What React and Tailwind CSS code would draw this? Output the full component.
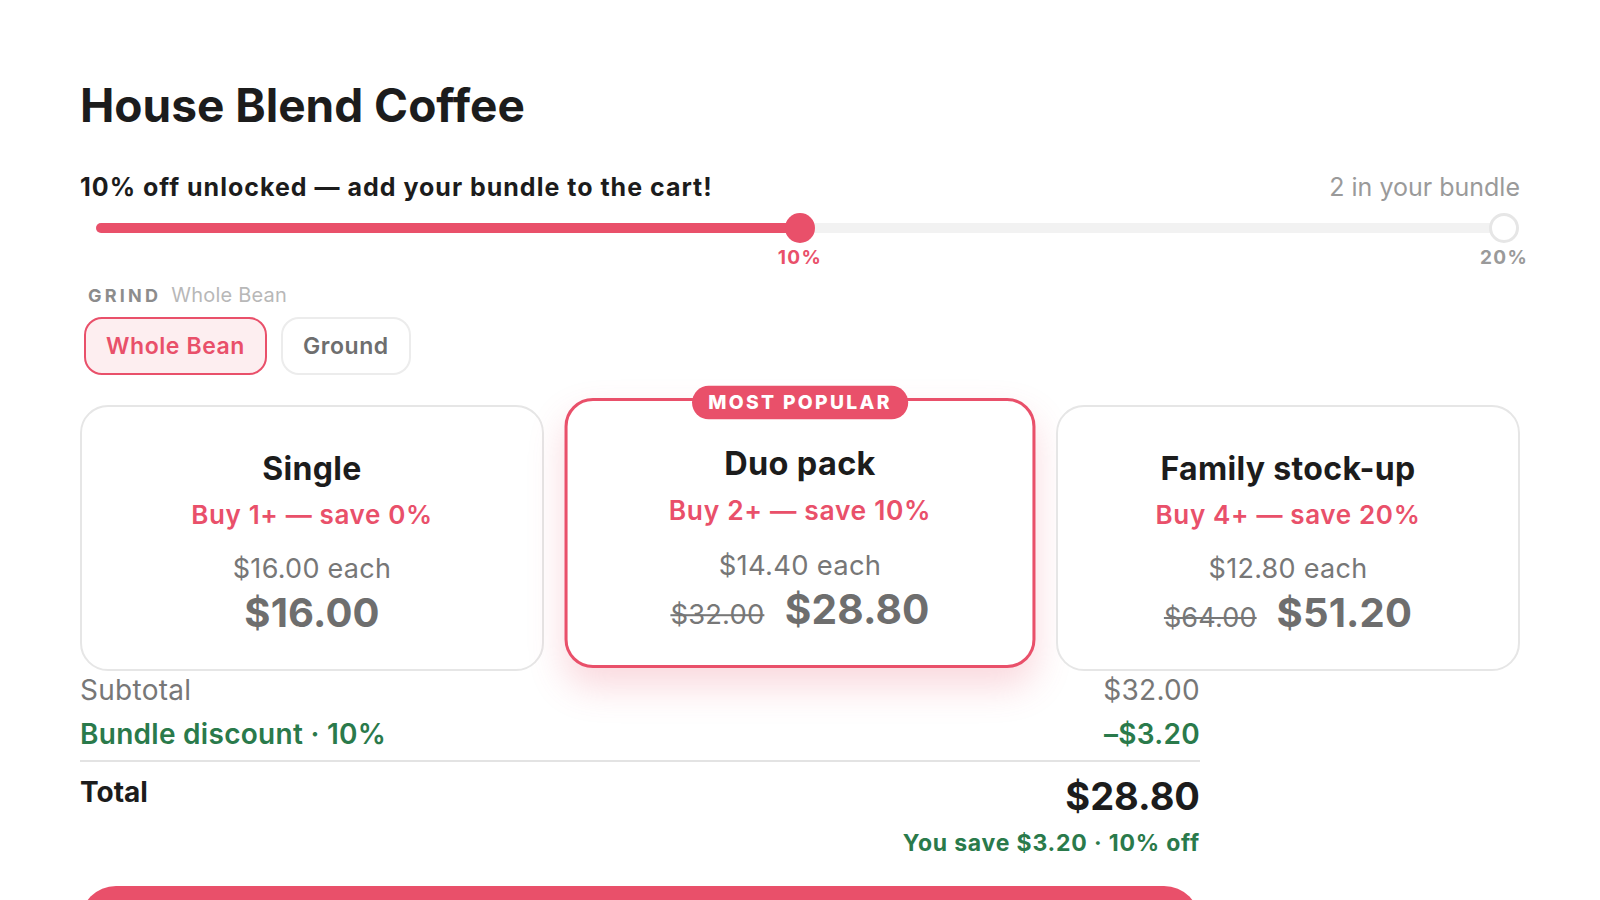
import React, { useState } from 'react';

const tiers = [
  { id: 'single', name: 'Single', rule: 'Buy 1+ — save 0%', each: '$16.00', was: null, price: '$16.00' },
  { id: 'duo', name: 'Duo pack', rule: 'Buy 2+ — save 10%', each: '$14.40', was: '$32.00', price: '$28.80', popular: true },
  { id: 'family', name: 'Family stock-up', rule: 'Buy 4+ — save 20%', each: '$12.80', was: '$64.00', price: '$51.20' },
];

const App = () => {
  const [grind, setGrind] = useState('Whole Bean');
  const [tier, setTier] = useState('duo');

  return (
    <div className="min-h-screen bg-white px-20 pt-[82px] text-[#1c1c1c]" style={{ fontFamily: 'Inter, "Noto Sans", sans-serif' }}>
      <h1 className="text-[46px] font-bold leading-none">House Blend Coffee</h1>

      {/* PROGRESS */}
      <div className="mt-[43px] flex items-baseline justify-between">
        <p className="text-[25px] font-bold leading-8 tracking-[0.04em]">10% off unlocked — add your bundle to the cart!</p>
        <p className="text-[25px] leading-8 text-[#9a9a9a]">2 in your bundle</p>
      </div>
      <div className="relative mx-4 mt-[10px] h-[56px]">
        <div className="absolute inset-x-0 top-[10px] h-[10px] rounded-full bg-[#f2f2f2]">
          <div className="h-full w-1/2 rounded-full bg-[#e9506a]"></div>
        </div>
        <div className="absolute left-1/2 top-0 size-[30px] -translate-x-1/2 rounded-full bg-[#e9506a]"></div>
        <div className="absolute left-full top-0 size-[30px] -translate-x-1/2 rounded-full border-[3px] border-[#e6e6e6] bg-white"></div>
        <span className="absolute left-1/2 top-[33px] -translate-x-1/2 text-[19px] font-bold leading-6 tracking-[0.07em] text-[#e9506a]">10%</span>
        <span className="absolute left-full top-[33px] -translate-x-1/2 text-[19px] font-bold leading-6 tracking-[0.07em] text-[#9a9a9a]">20%</span>
      </div>

      {/* GRIND */}
      <div className="mt-[16px] px-1">
        <p className="ml-1 flex items-baseline gap-2.5 leading-5">
          <span className="text-[18px] font-bold tracking-[0.18em] text-[#8c8c8c]">GRIND</span>
          <span className="text-[20px] tracking-[0.01em] text-[#b8b8b8]">{grind}</span>
        </p>
        <div className="mt-[11px] flex gap-3.5">
          {['Whole Bean', 'Ground'].map((g) => (
            <button key={g} onClick={() => setGrind(g)}
              className={`h-[58px] rounded-[18px] border-2 px-5 text-[23px] font-semibold tracking-[0.025em] ${
                grind === g ? 'border-[#e9506a] bg-[#fdeef0] text-[#e9506a]' : 'border-[#ececec] bg-white text-[#6e6e6e]'
              }`}>
              {g}
            </button>
          ))}
        </div>
      </div>

      {/* TIERS */}
      <div className="mt-[30px] grid grid-cols-3 gap-6">
        {tiers.map((t) => {
          const active = tier === t.id;
          return (
            <div key={t.id} onClick={() => setTier(t.id)}
              className={`relative flex h-[266px] cursor-pointer flex-col items-center rounded-[28px] bg-white pt-[44px] text-center ${
                active ? '-translate-y-[5px] scale-[1.015] border-[3px] border-[#e9506a] shadow-[0_18px_36px_rgba(233,80,106,0.22)]' : 'border-2 border-[#e6e6e6]'
              }`}>
              {t.popular && (
                <span className="absolute left-1/2 top-[-15px] -translate-x-1/2 rounded-full bg-[#e9506a] px-4 text-[19px] font-extrabold leading-[33px] tracking-[0.12em] text-white">
                  MOST POPULAR
                </span>
              )}
              <p className="text-[32px] font-bold leading-9 tracking-[0.01em] text-[#1c1c1c]">{t.name}</p>
              <p className="mt-3 text-[26px] font-semibold leading-8 tracking-[0.025em] text-[#e9506a]">{t.rule}</p>
              <p className="mt-[22px] text-[27px] leading-8 tracking-[0.01em] text-[#777]">{t.each} each</p>
              <p className="mt-[6px] flex items-baseline gap-5 leading-[44px] tracking-[0.01em]">
                {t.was && <span className="text-[27px] text-[#777] line-through">{t.was}</span>}
                <span className="text-[40px] font-bold text-[#6e6e6e]">{t.price}</span>
              </p>
            </div>
          );
        })}
      </div>

      {/* SUMMARY */}
      <div className="mt-[3px] max-w-[1120px]">
        <div className="flex justify-between text-[28px] leading-8 tracking-[0.01em] text-[#777]">
          <span>Subtotal</span>
          <span>$32.00</span>
        </div>
        <div className="mt-3 flex justify-between text-[28px] font-semibold leading-8 tracking-[0.01em] text-[#2a7a4b]">
          <span>Bundle discount · 10%</span>
          <span>–$3.20</span>
        </div>
        <div className="mt-[10px] border-t-2 border-[#e3e3e3]"></div>
        <div className="flex items-start justify-between pt-3">
          <span className="text-[28px] font-bold leading-9">Total</span>
          <span className="text-[38px] font-bold leading-[44px]">$28.80</span>
        </div>
        <p className="mt-[11px] text-right text-[23px] font-bold leading-7 tracking-[0.035em] text-[#2a7a4b]">You save $3.20 · 10% off</p>
        <button className="mt-[29px] h-[72px] w-full rounded-[36px] bg-[#e9506a] text-[24px] font-bold text-white">
          Add bundle to cart — $28.80
        </button>
      </div>
    </div>
  );
};

export default App;
